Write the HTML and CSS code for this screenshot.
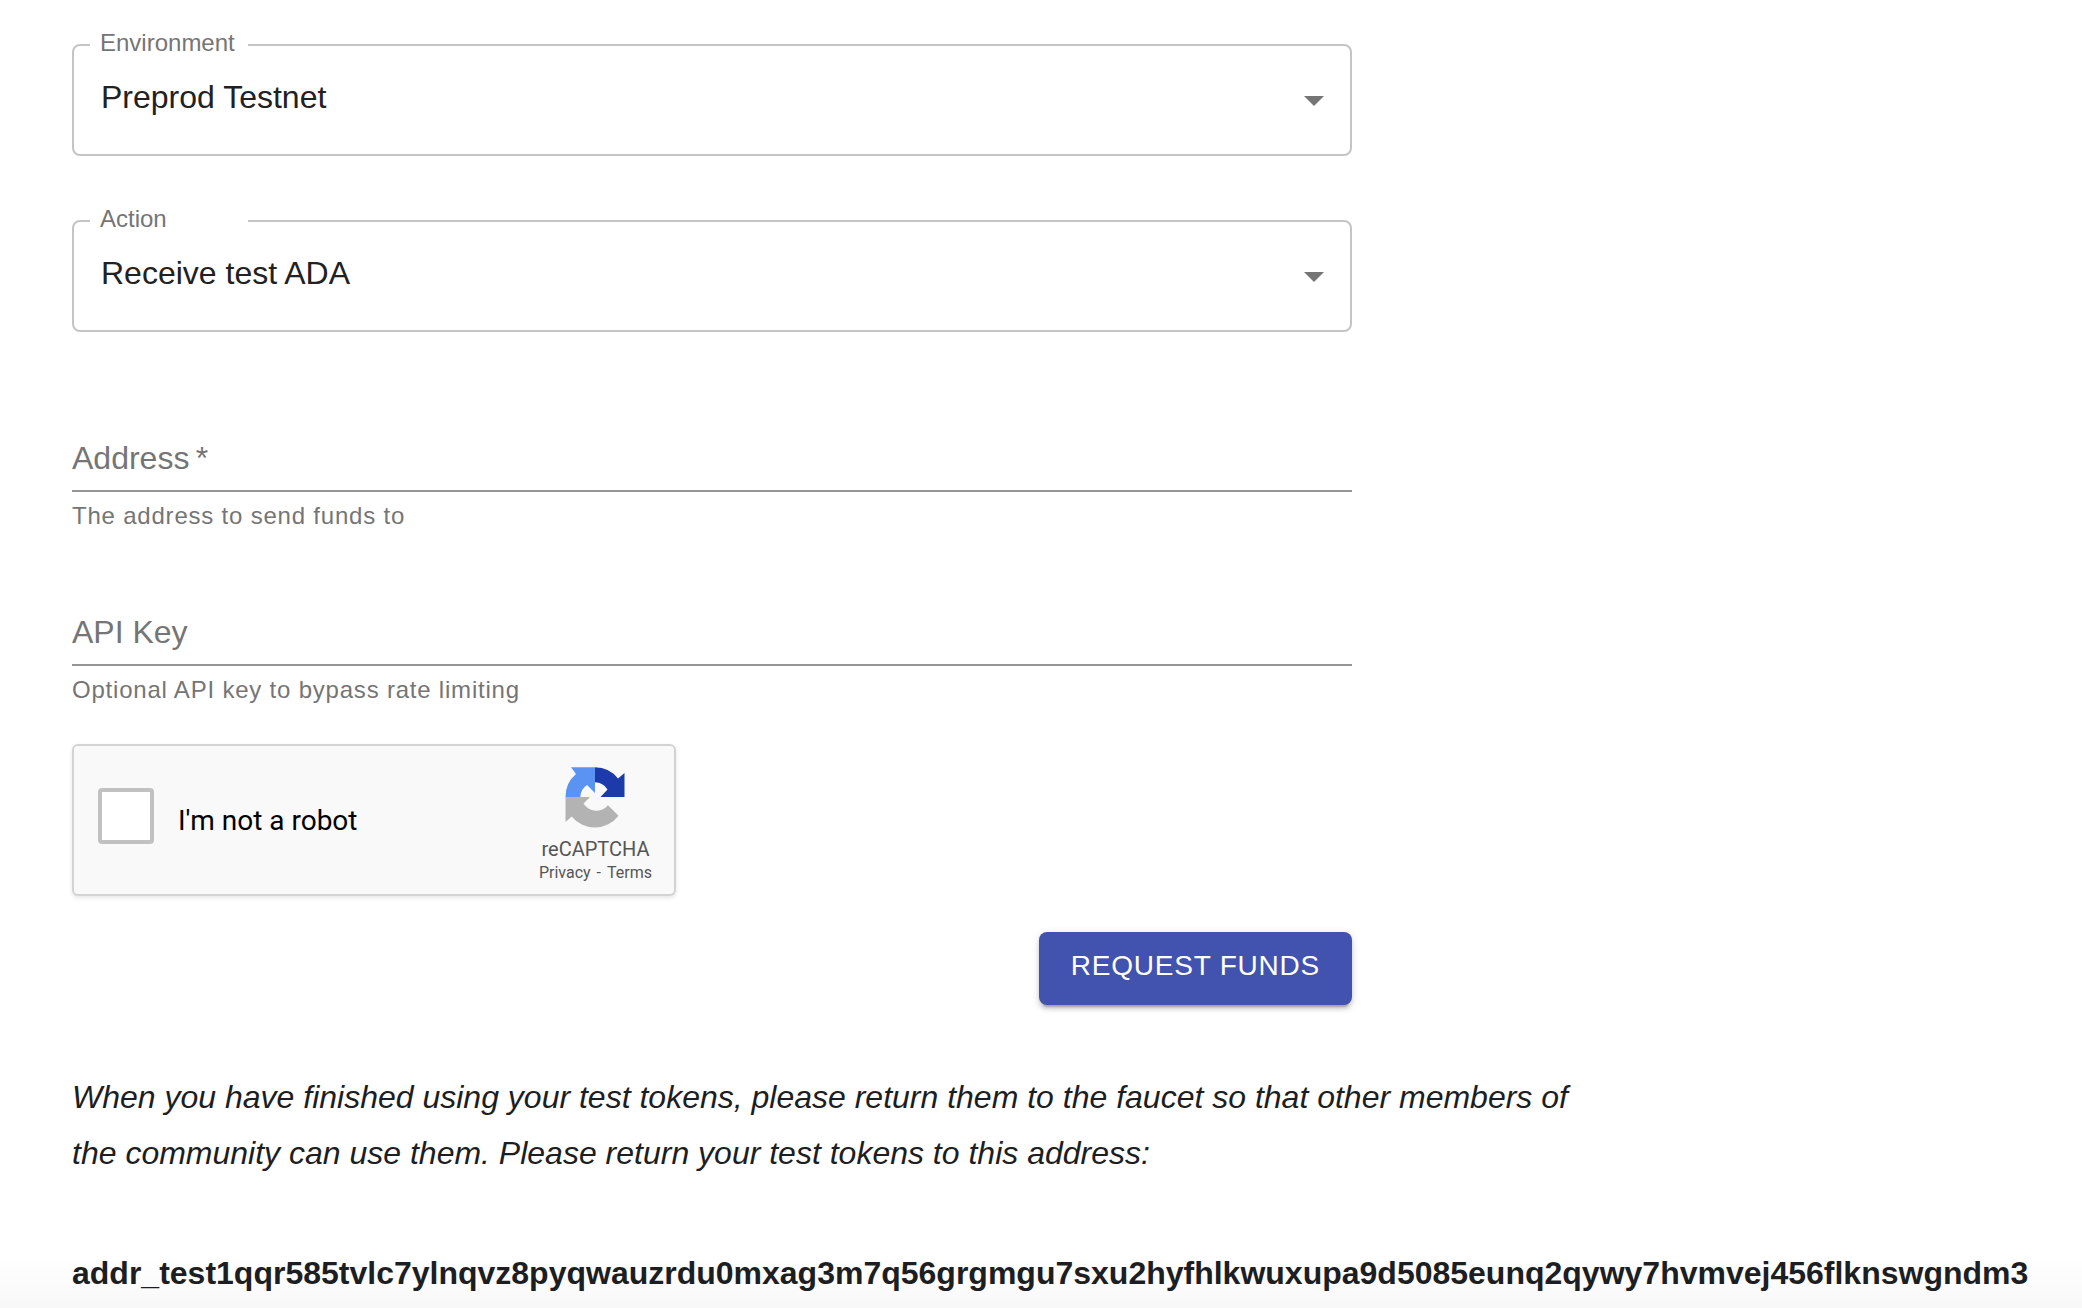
FILE: index.html
```
<!DOCTYPE html>
<html lang="en">
<head>
<meta charset="utf-8">
<meta name="viewport" content="width=device-width, initial-scale=1">
<title>Testnet faucet</title>
<link rel="stylesheet" href="styles.css">
</head>
<body>
<main class="page">
  <form class="faucet">
    <fieldset class="outlined">
      <legend class="outlined-legend"><label for="environment">Environment</label></legend>
      <div class="select-wrap">
        <select class="select" id="environment">
          <option>Preprod Testnet</option>
        </select>
        <svg class="select-arrow" viewBox="0 0 24 24" aria-hidden="true"><path d="M7 10l5 5 5-5z"/></svg>
      </div>
    </fieldset>

    <fieldset class="outlined">
      <legend class="outlined-legend"><label for="action">Action</label></legend>
      <div class="select-wrap">
        <select class="select" id="action">
          <option>Receive test ADA</option>
        </select>
        <svg class="select-arrow" viewBox="0 0 24 24" aria-hidden="true"><path d="M7 10l5 5 5-5z"/></svg>
      </div>
    </fieldset>

    <div class="text-fields">
      <div class="text-field">
        <div class="text-control">
          <input class="text-input" id="address" type="text" required aria-describedby="address-help">
          <label class="text-label" for="address">Address&thinsp;*</label>
        </div>
        <p class="helper" id="address-help">The address to send funds to</p>
      </div>
      <div class="text-field">
        <div class="text-control">
          <input class="text-input" id="api-key" type="text" aria-describedby="api-key-help">
          <label class="text-label" for="api-key">API Key</label>
        </div>
        <p class="helper" id="api-key-help">Optional API key to bypass rate limiting</p>
      </div>
    </div>

    <div class="captcha">
      <input class="captcha-box" id="robot" type="checkbox">
      <label class="captcha-label" for="robot">I'm not a robot</label>
      <div class="captcha-brand">
        <svg class="captcha-logo" viewBox="0 0 64 64" aria-hidden="true">
          <path fill="#1c3aa9" d="M61.500 33V9L55 14.500A29.700 29.700 0 0 0 32 3.300V18.300A15 15 0 0 1 44.500 25.500L37.500 33z"/>
          <path fill="#5a93f2" d="M32 3.300H8L13 10A29.700 29.700 0 0 0 2.500 33H17.300A15 15 0 0 1 24 21L32 29z"/>
          <path fill="#b3b3b3" d="M2.500 33V58L8.700 52.500A29.700 29.700 0 0 0 55.500 51.700L45 41.300A15 15 0 0 1 20.500 39.500L27 33z"/>
        </svg>
        <span class="captcha-name">reCAPTCHA</span>
        <span class="captcha-links"><a href="#privacy">Privacy</a><span>-</span><a href="#terms">Terms</a></span>
      </div>
    </div>

    <button class="submit" type="submit">REQUEST FUNDS</button>
  </form>

  <p class="notice">When you have finished using your test tokens, please return them to the faucet so that other members of the community can use them. Please return your test tokens to this address:</p>

  <p class="return-address">addr_test1qqr585tvlc7ylnqvz8pyqwauzrdu0mxag3m7q56grgmgu7sxu2hyfhlkwuxupa9d5085eunq2qywy7hvmvej456flknswgndm3</p>
</main>
</body>
</html>
```
FILE: styles.css
```
* {
  box-sizing: border-box;
}

body {
  margin: 0;
  background: #fff;
  color: #1c1e21;
  font-family: "Liberation Sans", Arial, Helvetica, sans-serif;
  font-size: 32px;
  line-height: 56px;
}

p {
  margin: 0;
}

.page {
  padding-top: 30px;
}

.faucet {
  display: flex;
  flex-direction: column;
  max-width: 1424px;
  padding: 0 72px;
}

/* Outlined drop-downs */
.outlined {
  min-width: 0;
  margin: 0 0 50px;
  padding: 0;
  border: 2px solid #c4c4c4;
  border-radius: 8px;
}

.outlined-legend {
  width: 158px;
  margin-left: 16px;
  padding: 0 10px 4px;
  color: #757575;
  font-size: 24px;
  line-height: 26px;
}

.select-wrap {
  display: grid;
}

.select {
  grid-area: 1 / 1;
  width: 100%;
  height: 94px;
  padding: 0 64px 20px 27px;
  border: 0;
  background: transparent;
  color: #212121;
  font: inherit;
  appearance: none;
}

.select-arrow {
  grid-area: 1 / 1;
  justify-self: end;
  width: 48px;
  height: 48px;
  margin: 16px 12px 0 0;
  fill: #757575;
  pointer-events: none;
}

/* Underlined text fields */
.text-fields {
  display: flex;
  flex-direction: column;
  gap: 66px;
  margin: 46px 0 34px;
}

.text-control {
  display: grid;
  color: #757575;
}

.text-input {
  grid-area: 1 / 1;
  width: 100%;
  height: 64px;
  padding: 0;
  border: 0;
  border-bottom: 2px solid #949494;
  background: transparent;
  color: #212121;
  font: inherit;
}

.text-label {
  grid-area: 1 / 1;
  justify-self: start;
  line-height: 60px;
}

.helper {
  margin-top: 4px;
  color: #757575;
  font-size: 24px;
  line-height: 40px;
  letter-spacing: 0.033em;
}

/* Captcha widget */
.captcha {
  display: flex;
  align-items: center;
  width: 604px;
  max-width: 100%;
  height: 152px;
  padding: 0 22px 0 24px;
  border: 2px solid #d3d3d3;
  border-radius: 6px;
  background: #f9f9f9;
  box-shadow: 0 2px 4px rgba(0, 0, 0, 0.1);
  color: #000;
  font-family: Roboto, sans-serif;
}

.captcha-box {
  width: 56px;
  height: 56px;
  margin: 0 24px 8px 0;
  border: 4px solid #c1c1c1;
  border-radius: 4px;
  background: #fff;
  appearance: none;
}

.captcha-label {
  flex: 1;
  padding-top: 2px;
  font-size: 28px;
  line-height: 34px;
}

.captcha-brand {
  display: flex;
  flex-direction: column;
  align-items: center;
  padding-top: 8px;
  color: #555;
}

.captcha-logo {
  width: 64px;
  height: 64px;
  margin-bottom: 8px;
}

.captcha-name {
  font-size: 20px;
  line-height: 26px;
}

.captcha-links {
  display: flex;
  gap: 6px;
  font-size: 16px;
  line-height: 22px;
}

.captcha-links a {
  color: inherit;
  text-decoration: none;
}

.submit {
  align-self: flex-end;
  margin-top: 36px;
  padding: 10px 32px 15px;
  border: 0;
  border-radius: 8px;
  background: #4252af;
  box-shadow: 0 6px 2px -4px rgba(0, 0, 0, 0.2), 0 4px 4px rgba(0, 0, 0, 0.14), 0 2px 10px rgba(0, 0, 0, 0.12);
  color: #fff;
  font-family: inherit;
  font-size: 28px;
  line-height: 48px;
  letter-spacing: 0.028em;
}

/* Return instructions */
.notice {
  max-width: 1680px;
  margin: 64px 0;
  padding: 0 72px;
  font-style: italic;
}

.return-address {
  padding: 0 32px 7px 72px;
  background: linear-gradient(#fff 20%, #f8f8f8);
  font-weight: 700;
  overflow-wrap: anywhere;
}
```
